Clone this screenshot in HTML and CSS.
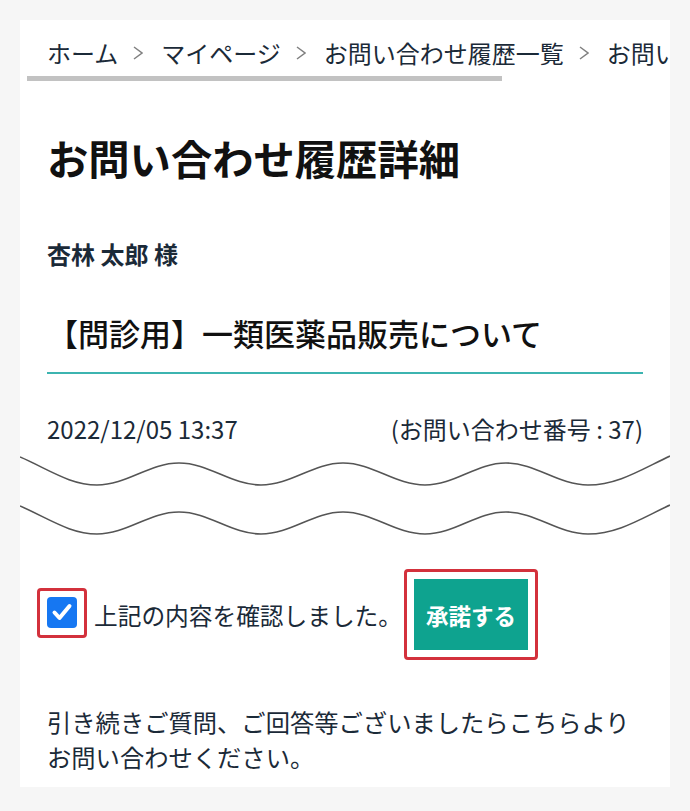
FILE: index.html
```html
<!DOCTYPE html>
<html lang="ja">
<head>
<meta charset="utf-8">
<title>お問い合わせ履歴詳細</title>
<link rel="stylesheet" href="styles.css">
</head>
<body>
<main class="card">
  <nav class="breadcrumb">
    <span class="crumb">ホーム</span>
    <svg class="chev" width="10" height="14" viewBox="0 0 10 14"><polyline points="1,1 9,7 1,13" fill="none" stroke="#808080" stroke-width="1.5"/></svg>
    <span class="crumb">マイページ</span>
    <svg class="chev" width="10" height="14" viewBox="0 0 10 14"><polyline points="1,1 9,7 1,13" fill="none" stroke="#808080" stroke-width="1.5"/></svg>
    <span class="crumb">お問い合わせ履歴一覧</span>
    <svg class="chev" width="10" height="14" viewBox="0 0 10 14"><polyline points="1,1 9,7 1,13" fill="none" stroke="#808080" stroke-width="1.5"/></svg>
    <span class="crumb">お問い合わせ履歴詳細</span>
  </nav>
  <div class="scroll-thumb"></div>

  <h1 class="title">お問い合わせ履歴詳細</h1>
  <p class="name">杏林 太郎 様</p>
  <h2 class="subject">【問診用】一類医薬品販売について</h2>

  <div class="meta">
    <span>2022/12/05 13:37</span>
    <span>(お問い合わせ番号 : 37)</span>
  </div>

  <svg class="waves" width="650" height="100" viewBox="0 0 650 100">
    <path id="wave" d="M0,10 C28,22 50,38 77,38 C107,38 129,16 159,16 C189,16 211,38 241,38 C271,38 293,16 323,16 C353,16 375,38 405,38 C435,38 456,16 486,16 C516,16 538,38 568,38 C598,38 622,22 650,9" fill="none" stroke="#555" stroke-width="1.6"/>
    <use href="#wave" transform="translate(0,49)"/>
  </svg>

  <div class="confirm-row">
    <label class="check-frame">
      <span class="checkbox">
        <svg width="30" height="30" viewBox="0 0 30 30"><polyline points="7.5,15.5 12.5,21 22.5,9" fill="none" stroke="#fff" stroke-width="4" stroke-linecap="round" stroke-linejoin="round"/></svg>
      </span>
    </label>
    <span class="check-label">上記の内容を確認しました。</span>
    <div class="btn-frame">
      <button class="btn">承諾する</button>
    </div>
  </div>

  <p class="note">引き続きご質問、ご回答等ございましたらこちらより<br>お問い合わせください。</p>
</main>
</body>
</html>
```

FILE: styles.css
```css
html, body {
  margin: 0;
  padding: 0;
  background: #f6f6f6;
}

body {
  font-family: "Noto Sans CJK JP", "Noto Sans", sans-serif;
  color: #1b2a38;
}

.card {
  margin: 20px;
  width: 650px;
  box-sizing: border-box;
  background: #fff;
  padding: 15px 27px 13px;
  overflow: hidden;
}

.breadcrumb {
  display: flex;
  align-items: center;
  white-space: nowrap;
  overflow: hidden;
  margin: 0 -27px 0 -20px;
  padding-left: 20px;
  font-size: 24px;
  line-height: 36px;
  color: #1b2a38;
}

.crumb {
  flex: none;
}

.chev {
  flex: none;
  margin: 0 18px 0 15px;
}

.scroll-thumb {
  margin: 5px 0 0 -20px;
  width: 475px;
  height: 5px;
  background: #c2c2c2;
}

.title {
  margin: 47px 0 0;
  font-size: 41.3px;
  line-height: 58px;
  font-weight: 700;
  color: #111;
}

.name {
  margin: 50px 0 0;
  font-size: 24px;
  line-height: 36px;
  font-weight: 700;
  color: #1b2a38;
}

.subject {
  margin: 39px 0 0;
  font-size: 31px;
  line-height: 44px;
  font-weight: 500;
  color: #111;
  padding-bottom: 17px;
  border-bottom: 2px solid #3cb4b0;
}

.meta {
  margin-top: 37px;
  display: flex;
  justify-content: space-between;
  font-size: 24px;
  line-height: 36px;
  color: #1b2a38;
}

.waves {
  display: block;
  margin: 0 -27px;
}

.confirm-row {
  margin-top: 22px;
  display: flex;
  align-items: center;
}

.check-frame {
  margin-left: -10px;
  margin-top: -4px;
  border: 3px solid #d3313c;
  border-radius: 4px;
  padding: 6px 7px 7px 7px;
  display: flex;
}

.checkbox {
  width: 30px;
  height: 31px;
  border-radius: 4px;
  background: #1677f2;
  display: flex;
  align-items: center;
  justify-content: center;
}

.checkbox svg {
  display: block;
}

.check-label {
  margin-left: 7px;
  font-size: 23.7px;
  line-height: 34px;
  color: #1b2a38;
}

.btn-frame {
  margin-left: 2px;
  border: 3px solid #d3313c;
  border-radius: 4px;
  padding: 7px;
  display: flex;
}

.btn {
  width: 114px;
  height: 71px;
  border: none;
  background: #0ea38f;
  color: #fff;
  font-family: "Noto Sans CJK JP", "Noto Sans", sans-serif;
  font-size: 22.5px;
  font-weight: 700;
  padding: 0;
}

.note {
  margin: 44px 0 0;
  font-size: 24.3px;
  line-height: 35px;
  color: #1b2a38;
}
```
